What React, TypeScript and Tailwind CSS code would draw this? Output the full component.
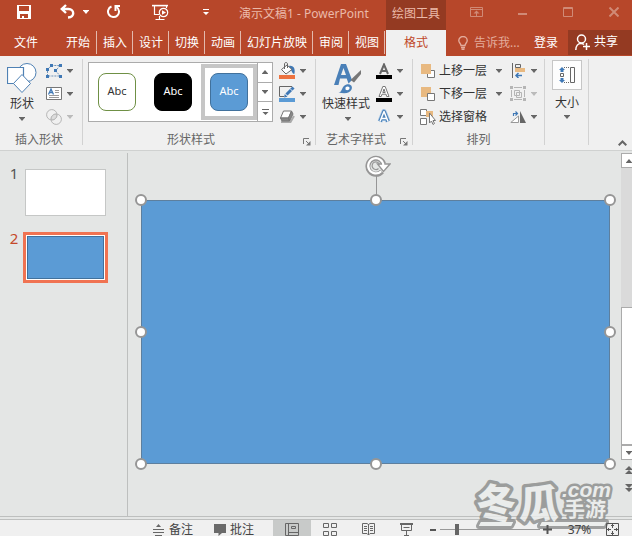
import React from 'react'
import clsx from 'clsx'

const TABS = ['开始', '插入', '设计', '切换', '动画', '幻灯片放映', '审阅', '视图']

const HANDLES = [
  'left-0 top-0',
  'left-1/2 top-0',
  'left-full top-0',
  'left-0 top-1/2',
  'left-full top-1/2',
  'left-0 top-full',
  'left-1/2 top-full',
  'left-full top-full',
]

interface ICaretProps {
  className?: string
}

const Caret: React.FC<ICaretProps> = ({ className }) => (
  <svg width="6" height="4" viewBox="0 0 6 4" className={clsx('shrink-0', className)} fill="currentColor">
    <path d="M0 0h6v.5L3 4 0 .5z" />
  </svg>
)

interface IIconButtonProps {
  label: string
  className?: string
  disabled?: boolean
  children: React.ReactNode
}

const IconButton: React.FC<IIconButtonProps> = ({ label, className, disabled, children }) => (
  <button type="button" aria-label={label} disabled={disabled} className={clsx('flex items-center', className)}>
    {children}
  </button>
)

const TitleBar: React.FC = () => (
  <div className="flex h-[30px] text-white">
    <div className="flex w-[239px] shrink-0 items-start pt-1 pl-[17px]">
      <IconButton label="保存">
        <svg width="14" height="15" viewBox="0 0 14 15" fill="currentColor">
          <path fillRule="evenodd" d="M0 1h14v14H0zM2 2v5h10V2zM3 10v4h2v-2h2v2h4v-4z" />
        </svg>
      </IconButton>
      <IconButton label="撤消" className="ml-[29px]">
        <svg width="15" height="15" viewBox="0 0 15 15" fill="none" stroke="currentColor" strokeWidth="2.4">
          <path d="M6 1L1.800 5 6 9M2 5h6.500c3 0 4.700 2 4.700 4.200S11.500 13.200 8 13.500" />
        </svg>
      </IconButton>
      <IconButton label="撤消选项" className="ml-2 h-[15px]">
        <Caret />
      </IconButton>
      <IconButton label="重复" className="ml-[18px]">
        <svg width="14" height="15" viewBox="0 0 14 15" fill="none" stroke="currentColor" strokeWidth="2">
          <path d="M4.500 2.500A5.500 5.500 0 1 0 9.500 3" />
          <path d="M13 2H8.500v5" />
        </svg>
      </IconButton>
      <IconButton label="从头开始放映" className="ml-[31px]">
        <svg width="17" height="17" viewBox="0 0 17 17" fill="none" stroke="currentColor" strokeWidth="1.200">
          <path d="M0 1.600h16" strokeWidth="1.600" />
          <path d="M2.500 2v8.500H7M14.500 2v2M7.500 12v3M3.500 15.500h9" />
          <circle cx="11.500" cy="8.500" r="4.200" />
          <path d="M10 6.200l4 2.300-4 2.300z" fill="currentColor" stroke="none" />
        </svg>
      </IconButton>
      <IconButton label="自定义快速访问工具栏" className="ml-[34px] h-4">
        <svg width="6" height="6" viewBox="0 0 6 6" fill="currentColor">
          <path d="M0 0h6v1H0zM0 3h6L3 6z" />
        </svg>
      </IconButton>
    </div>
    <h1 className="w-[147px] shrink-0 text-xs leading-7 whitespace-nowrap text-[#ebb9a9]">演示文稿1 - PowerPoint</h1>
    <div className="w-[60px] shrink-0 bg-[#943a22] text-center text-xs leading-7 text-[#ebb9a9]">绘图工具</div>
    <div className="-mr-[5px] ml-auto flex h-6 text-[#d08a76]">
      <IconButton label="功能区显示选项" className="w-[46px] justify-center">
        <svg width="13" height="10" viewBox="0 0 13 10" fill="none" stroke="currentColor">
          <path d="M.5.5h12v9H.5zM1 2.500h11M6.500 9V4.500" />
          <path d="M6.500 3.500L9.500 6.500h-6z" fill="currentColor" stroke="none" />
        </svg>
      </IconButton>
      <IconButton label="最小化" className="w-[46px] justify-center pt-1">
        <svg width="9" height="2" viewBox="0 0 9 2" fill="currentColor">
          <path d="M0 0h9v2H0z" />
        </svg>
      </IconButton>
      <IconButton label="最大化" className="w-[46px] justify-center">
        <svg width="10" height="10" viewBox="0 0 10 10" fill="none" stroke="currentColor">
          <path d="M.5.5h9v9h-9zM0 1.500h10" />
        </svg>
      </IconButton>
      <IconButton label="关闭" className="w-[46px] justify-center">
        <svg width="10" height="10" viewBox="0 0 10 10" stroke="currentColor" strokeWidth="2">
          <path d="M.5.5l9 9M9.500.5l-9 9" />
        </svg>
      </IconButton>
    </div>
  </div>
)

const TabBar: React.FC = () => (
  <nav className="flex h-[26px] text-xs leading-6 whitespace-nowrap text-white">
    <button type="button" className="w-[60px] shrink-0 pl-3.5 text-left">
      文件
    </button>
    <div className="flex shrink-0 items-start pt-px">
      {TABS.map((tab) => (
        <button
          key={tab}
          type="button"
          className="h-[23px] border-r border-[#e3b9ad] pr-[5px] pl-1.5 leading-[22px] first:pr-1.5">
          {tab}
        </button>
      ))}
    </div>
    <button type="button" className="ml-px w-[60px] shrink-0 bg-[#f0f0f0] text-[#c0482a]">
      格式
    </button>
    <label className="ml-auto flex items-center gap-1.5 text-[#e3ab9b]">
      <svg width="10" height="14" viewBox="0 0 10 14" fill="none" stroke="currentColor" strokeWidth="1.400">
        <path d="M3 9.500C3 7.500.8 7 .8 4.500a4.200 4 0 0 1 8.400 0C9.200 7 7 7.500 7 9.500zM3 11.500h4M3.500 13.300h3" />
      </svg>
      <input
        type="text"
        aria-label="告诉我您想要做什么"
        placeholder="告诉我..."
        className="w-[50px] bg-transparent text-xs leading-6 outline-none placeholder:text-[#e3ab9b]"
      />
    </label>
    <button type="button" className="ml-2.5 shrink-0">
      登录
    </button>
    <button type="button" className="ml-2.5 flex h-[25px] w-16 shrink-0 items-center gap-1 bg-[#943a22] pl-[7px] leading-[22px]">
      <svg width="15" height="17" viewBox="0 0 15 17" fill="none" stroke="currentColor" strokeWidth="1.500">
        <circle cx="6.500" cy="5" r="4" />
        <path d="M.8 16c0-4 2.200-6.500 5.200-6.500 1.500 0 2.500.5 3 1M8 12.500h7M11.500 9v7" />
      </svg>
      <span className="-mt-0.5">共享</span>
    </button>
  </nav>
)

interface IRibbonGroupProps {
  title: string
  className: string
  hasLauncher?: boolean
  children: React.ReactNode
}

const RibbonGroup: React.FC<IRibbonGroupProps> = ({ title, className, hasLauncher, children }) => (
  <section className={clsx('flex h-[86px] shrink-0 flex-col justify-between border-r border-[#d2d2d2]', className)}>
    <div className="flex">{children}</div>
    {title ? (
      <div className="flex h-2.5 items-center text-xs leading-[10px] text-[#666]">
        <h2 className={clsx('flex-1 text-center', hasLauncher && 'pr-1')}>{title}</h2>
        {hasLauncher ? (
          <IconButton label={`${title}选项`} className="mr-1 pt-1">
            <svg width="8" height="8" viewBox="0 0 8 8" fill="none" stroke="#777">
              <path d="M.5 6V.5H6M3 3l3.500 3.500" />
              <path d="M7.500 3v4.500H3z" fill="#777" stroke="none" />
            </svg>
          </IconButton>
        ) : null}
      </div>
    ) : null}
  </section>
)

interface IToolProps {
  label: string
  text?: string
  disabled?: boolean
  hideCaret?: boolean
  children: React.ReactNode
}

// One row of a ribbon column: icon, optional caption, drop-down arrow
const Tool: React.FC<IToolProps> = ({ label, text, disabled, hideCaret, children }) => (
  <button
    type="button"
    aria-label={label}
    disabled={disabled}
    className={clsx('flex h-[23px] items-center', disabled ? 'text-[#bbb]' : 'text-[#666]')}>
    <span className="flex w-4 justify-center">{children}</span>
    {text ? <span className="w-[60px] pl-[3px] text-left text-xs whitespace-nowrap text-[#333]">{text}</span> : null}
    {hideCaret ? null : <Caret className={text ? '' : 'ml-[5px]'} />}
  </button>
)

const InsertShapes: React.FC = () => (
  <RibbonGroup title="插入形状" className="w-[83px] pr-1">
    <button type="button" className="flex w-[46px] flex-col items-center pt-1 pr-0.5 text-xs text-[#333]">
      <svg width="30" height="31" viewBox="0 0 30 31" fill="#fff" stroke="#4f81b4">
        <circle cx="20" cy="9.500" r="9" />
        <path d="M.5 4.500h16v16H.5z" strokeWidth="1.200" />
        <path d="M15 11.500l8.500 9-8.500 9-8.500-9z" />
      </svg>
      <span className="leading-5">形状</span>
      <Caret className="mt-[3px] text-[#666]" />
    </button>
    <div className="flex flex-col">
      <Tool label="编辑形状">
        <svg width="16" height="14" viewBox="0 0 16 14" fill="#3f78b5">
          <path d="M1.500 12V5L6 1.500h8L9.500 7l5 5z" fill="none" stroke="#6f93b8" strokeDasharray="2 1" />
          <path d="M0 4h3v3H0zM4 0h3v3H4zM13 0h3v3h-3zM8 5h3v3H8zM0 11h3v3H0zM13 11h3v3h-3z" />
        </svg>
      </Tool>
      <Tool label="文本框">
        <svg width="16" height="13" viewBox="0 0 16 13" fill="none" stroke="#777">
          <path d="M.5.5h15v12H.5z" fill="#fff" />
          <path d="M9 3.500h4M9 5.500h4M3 8.500h10M3 10.500h10" stroke="#999" />
          <path d="M2.500 7.500L5 2l2.500 5.500M3.500 5.500h3" stroke="#3f78b5" strokeWidth="1.300" />
        </svg>
      </Tool>
      <Tool label="合并形状" disabled>
        <svg width="16" height="16" viewBox="0 0 16 16" fill="none" stroke="#b5b5b5">
          <circle cx="5.800" cy="5.800" r="5.200" />
          <circle cx="10.200" cy="10.200" r="5.200" />
          <path d="M5.500 10.500c-1-3 2-6 5-5 1 3-2 6-5 5z" fill="#dcdcdc" />
        </svg>
      </Tool>
    </div>
  </RibbonGroup>
)

const SWATCHES = [
  { name: '白色', frame: '', box: 'border-[#6f9045] bg-white text-[#333]' },
  { name: '黑色', frame: '', box: 'border-black bg-black text-white' },
  { name: '蓝色', frame: 'border-4 border-[#c6c6c6]', box: 'border-[#41719c] bg-[#5b9bd5] text-white' },
]

const ShapeStyles: React.FC = () => (
  <RibbonGroup title="形状样式" className="w-[233px]" hasLauncher>
    <div className="mt-[3px] ml-[5px] flex h-[60px] w-[185px] border border-[#ababab] bg-white">
      {SWATCHES.map((swatch) => (
        <button
          key={swatch.name}
          type="button"
          aria-label={swatch.name}
          className={clsx('my-px flex w-14 items-center justify-center', swatch.frame)}>
          <span
            className={clsx(
              'flex size-[38px] shrink-0 items-center justify-center rounded-lg border pb-0.5 text-[11px] leading-4',
              swatch.box
            )}>
            Abc
          </span>
        </button>
      ))}
      <div className="flex flex-1 flex-col divide-y divide-[#ababab] border-l border-[#ababab] text-[#666]">
        <IconButton label="上一行" className="flex-1 justify-center">
          <Caret className="rotate-180" />
        </IconButton>
        <IconButton label="下一行" className="flex-1 justify-center">
          <Caret />
        </IconButton>
        <IconButton label="其他样式" className="flex-1 justify-center">
          <svg width="7" height="6" viewBox="0 0 7 6" fill="currentColor">
            <path d="M0 0h7v1H0zM.5 3h6l-3 3z" />
          </svg>
        </IconButton>
      </div>
    </div>
    <div className="ml-1.5 flex flex-col">
      <Tool label="形状填充">
        <svg width="16" height="17" viewBox="0 0 16 17" fill="none" stroke="#666">
          <path d="M0 13h16v4H0z" fill="#ed7340" stroke="none" />
          <path d="M10 4c5-1 6.500 3 5.300 8-2.500-.5-2.300-4-4.300-5z" fill="#3f78b5" stroke="none" />
          <path d="M2.500 7.500L8 3l5 4.500-6 4.500z" fill="#fff" />
          <path d="M5.500 7V2c0-2 3-2 3 0v4" />
        </svg>
      </Tool>
      <Tool label="形状轮廓">
        <svg width="16" height="16" viewBox="0 0 16 16" fill="none" stroke="#666">
          <path d="M0 12h16v4H0z" fill="#5b9bd5" stroke="none" />
          <path d="M13 .5H.5v10H5" />
          <path d="M7.500 8.500L14.500 1.500" stroke="#3f78b5" strokeWidth="3" />
          <path d="M5 11.500l.8-3.500 2.700 2.700z" fill="#3f78b5" stroke="none" />
          <path d="M11.200 2.800l2.200 2.200" stroke="#fff" strokeWidth=".8" />
        </svg>
      </Tool>
      <Tool label="形状效果">
        <svg width="16" height="13" viewBox="0 0 16 13" fill="none" stroke="#777">
          <path d="M2 12h9.500l3.500-6" stroke="#aaa" strokeWidth="2" />
          <path d="M4.500 1h8l-3 7h-8z" fill="#fff" />
          <path d="M12.500 1l1.500 3-3.500 7-1-3zM1.500 8h8l1 3h-7.500z" fill="#888" />
        </svg>
      </Tool>
    </div>
  </RibbonGroup>
)

const WordArtStyles: React.FC = () => (
  <RibbonGroup title="艺术字样式" className="w-[97px]" hasLauncher>
    <button type="button" className="flex w-[60px] flex-col items-center pt-[5px] pl-1 text-xs text-[#333]">
      <svg width="28" height="30" viewBox="0 0 28 30" fill="#4a80b8">
        <path fillRule="evenodd" d="M0 21L7 0h5l6 16-3.500 3.500-1.800-5H6L4.500 21zM7 11h5L9.500 4z" />
        <path d="M27 6v4l-7 8.500-3.500-2.500z" fill="#777" />
        <path d="M4.500 28.500c4 0 3-7 8-8 4-1 6.500 2 5 5-1.500 3.500-6 4.500-13 3z" />
        <path d="M11.500 23.500c1.500-2 4.500-1 4 1s-3 2-4 1z" fill="#fff" />
      </svg>
      <span className="pr-1 leading-5 whitespace-nowrap">快速样式</span>
      <Caret className="mt-[3px] text-[#666]" />
    </button>
    <div className="flex flex-col">
      <Tool label="文本填充">
        <svg width="16" height="16" viewBox="0 0 16 16" fill="none" stroke="#666">
          <path d="M0 12h16v4H0z" fill="#000" stroke="none" />
          <path d="M4 11l4-9.500L12 11M5.500 8h5" strokeWidth="2" />
        </svg>
      </Tool>
      <Tool label="文本轮廓">
        <svg width="16" height="16" viewBox="0 0 16 16" fill="#fff" stroke="#777">
          <path d="M0 12h16v4H0z" fill="#000" stroke="none" />
          <path d="M3 10.500L6.800.5h2.400l3.800 10h-2.300L10 8.200H6L5.200 10.500zM6.800 6.500h2.400L8 3z" fillRule="evenodd" />
        </svg>
      </Tool>
      <Tool label="文本效果">
        <svg width="16" height="15" viewBox="0 0 16 15" fill="none" strokeLinejoin="round">
          <path d="M4 12.500L8 2.500l4 10M5.500 9.500h5" stroke="#a9c8e6" strokeWidth="5" />
          <path d="M4 12.500L8 2.500l4 10M5.500 9.500h5" stroke="#4a80b8" strokeWidth="3.500" />
          <path d="M4 12.500L8 2.500l4 10M5.500 9.500h5" stroke="#fff" strokeWidth="1.500" />
        </svg>
      </Tool>
    </div>
  </RibbonGroup>
)

const Arrange: React.FC = () => (
  <RibbonGroup title="排列" className="w-[132px]">
    <div className="ml-[7px] flex flex-col">
      <Tool label="上移一层" text="上移一层">
        <svg width="14" height="14" viewBox="0 0 14 14" fill="none" stroke="#777">
          <path d="M6.500 6.500h7v7h-7z" fill="#fff" />
          <path d="M0 0h10v10H0z" fill="#e8b981" stroke="none" />
        </svg>
      </Tool>
      <Tool label="下移一层" text="下移一层">
        <svg width="14" height="14" viewBox="0 0 14 14" fill="none" stroke="#777">
          <path d="M0 0h10v10H0z" fill="#e8b981" stroke="none" />
          <path d="M6.500 6.500h7v7h-7z" fill="#fff" />
        </svg>
      </Tool>
      <Tool label="选择窗格" text="选择窗格" hideCaret>
        <svg width="16" height="16" viewBox="0 0 16 16" fill="#fff" stroke="#777">
          <path d="M.5.5h6v6h-6zM.5 9.500h6v6h-6z" />
          <path d="M6 2h7v6H6z" fill="#e8b981" stroke="none" />
          <path d="M9.500 4v10l2-2 1.500 3.500 1.500-1-1.500-3h2.500z" />
        </svg>
      </Tool>
    </div>
    <div className="ml-2 flex flex-col">
      <Tool label="对齐">
        <svg width="14" height="15" viewBox="0 0 14 15" fill="none" stroke="#666">
          <path d="M1.500 0v15M4.500 1.500h5v3h-5z" />
          <path d="M4 5h10v4H4z" fill="#e8b981" stroke="none" />
          <path d="M11 12.500H5M7.500 10L5 12.500 7.500 15" stroke="#3f78b5" strokeWidth="1.500" />
        </svg>
      </Tool>
      <Tool label="组合" disabled>
        <svg width="16" height="15" viewBox="0 0 16 15" fill="none" stroke="#b5b5b5">
          <path d="M4.500 4.500h5v5h-5zM6.500 6.500h5v5h-5zM4 1.500h8M1.500 4v7M14.500 4v7M4 13.500h8" />
          <path d="M0 0h3v3H0zM13 0h3v3h-3zM0 12h3v3H0zM13 12h3v3h-3z" fill="#b5b5b5" stroke="none" />
        </svg>
      </Tool>
      <Tool label="旋转">
        <svg width="16" height="12" viewBox="0 0 16 12" fill="none" stroke="#999">
          <path d="M8.500 5v6.500H.8z" fill="#fff" />
          <path d="M10 0l6 12h-6z" fill="#666" stroke="none" />
          <path d="M3.500 5V2.500H7M5.500.5l2 2-2 2" stroke="#3f78b5" strokeWidth="1.200" />
        </svg>
      </Tool>
    </div>
  </RibbonGroup>
)

const Size: React.FC = () => (
  <RibbonGroup title="" className="w-11">
    <button type="button" className="mt-px ml-[7px] flex flex-col items-center text-xs text-[#333]">
      <span className="flex size-[30px] items-center justify-center border border-[#c6c6c6] bg-[#fdfdfd]">
        <svg width="16" height="16" viewBox="0 0 16 16" fill="none" stroke="#666">
          <path d="M11.500.5h4v15h-4z" />
          <path d="M1.500 6.500h3v3h-3z" />
          <path d="M5 .5h6M5 15.500h6" strokeDasharray="1 1" />
          <path d="M3 0l3 3H4.500v2h-3V3H0zM3 16l3-3H4.500v-2h-3v2H0z" fill="#3f78b5" stroke="none" />
        </svg>
      </span>
      <span className="mt-[3px] leading-5">大小</span>
      <Caret className="mt-0.5 text-[#666]" />
    </button>
  </RibbonGroup>
)

const Ribbon: React.FC = () => (
  <div className="flex h-[95px] shrink-0 border-b border-[#cfd1d0] bg-[#f0f0f0] pt-[3px]">
    <InsertShapes />
    <ShapeStyles />
    <WordArtStyles />
    <Arrange />
    <Size />
    <IconButton label="折叠功能区" className="mr-[5px] mb-1 ml-auto self-end">
      <svg width="9" height="6" viewBox="0 0 9 6" fill="none" stroke="#666" strokeWidth="2">
        <path d="M.7 5.300L4.500 1.500l3.800 3.800" />
      </svg>
    </IconButton>
  </div>
)

const SlideList: React.FC = () => (
  <aside className="mt-0.5 w-32 shrink-0 border-r border-[#bdbfbe] text-[15px] leading-5">
    <button type="button" className="mt-4 flex w-full items-start text-[#555]">
      <span className="-mt-1.5 w-[25px] pl-[3px]">1</span>
      <span className="h-[47px] w-[81px] border border-[#c5c7c6] bg-white" />
    </button>
    <button type="button" className="mt-4 flex w-full items-start text-[#c4492a]">
      <span className="-mt-1 w-[23px] pl-[5px]">2</span>
      <span className="h-[51px] w-[85px] border-[3px] border-[#f07352] bg-white p-px">
        <span className="block size-full border border-[#41719c] bg-[#5b9bd5]" />
      </span>
    </button>
  </aside>
)

const Canvas: React.FC = () => (
  <div className="flex min-w-0 flex-1 pt-[49px] pr-[11px] pb-[52px] pl-[13px]">
    <div className="relative flex-1 bg-[#5b9bd5] outline -outline-offset-1 outline-[#5d7f9e]">
      {/* rotation handle */}
      <div className="absolute -top-7 left-1/2 h-7 w-px bg-[#969696]" />
      <svg
        width="26"
        height="22"
        viewBox="0 0 26 22"
        fill="none"
        className="absolute left-1/2 -mt-[45px] -translate-x-[11px]">
        <path d="M17 16.500A8 8 0 1 1 18.600 9" stroke="#969696" strokeWidth="5" />
        <path d="M12.500 9H25l-6.500 7.500z" fill="#fff" stroke="#969696" strokeWidth="1.400" />
        <path d="M16.200 16.200A7.600 7.600 0 1 1 18.400 10.500" stroke="#fff" strokeWidth="2.200" />
        <path d="M13.500 13.500A3.800 3.800 0 1 1 14.500 9.500" stroke="#969696" strokeWidth="1.200" />
      </svg>
      {HANDLES.map((place) => (
        <span
          key={place}
          className={clsx(
            'absolute size-3 -translate-x-1/2 -translate-y-1/2 rounded-full border-2 border-[#969696] bg-white',
            place
          )}
        />
      ))}
    </div>
  </div>
)

const ScrollBar: React.FC = () => (
  <div className="mt-0.5 flex w-[15px] shrink-0 flex-col text-[#666]">
    <div className="flex flex-1 flex-col bg-[#dadada]">
      <IconButton label="向上滚动" className="h-[15px] justify-center border border-[#ababab] bg-white">
        <Caret className="rotate-180" />
      </IconButton>
      <div className="flex-1" />
      <div className="h-[45%] border border-[#ababab] bg-white" />
      <IconButton label="向下滚动" className="h-[15px] justify-center border border-[#ababab] bg-white">
        <Caret />
      </IconButton>
    </div>
    <IconButton label="上一张幻灯片" className="mt-1.5 justify-center">
      <svg width="8" height="8" viewBox="0 0 8 8" fill="currentColor">
        <path d="M4 0l4 4H0zM4 4l4 4H0z" />
      </svg>
    </IconButton>
    <IconButton label="下一张幻灯片" className="mt-2.5 mb-6 justify-center">
      <svg width="8" height="8" viewBox="0 0 8 8" fill="currentColor">
        <path d="M0 0h8L4 4zM0 4h8L4 8z" />
      </svg>
    </IconButton>
  </div>
)

const StatusBar: React.FC = () => (
  <footer className="-mb-[3px] flex h-5 shrink-0 items-center border-t border-[#bdbfbe] bg-[#f0f0f0] text-xs text-[#444]">
    <div className="relative z-10 ml-auto flex h-full shrink-0 items-center">
      <button type="button" className="flex items-center gap-[5px] leading-5">
        <svg width="11" height="12" viewBox="0 0 11 12" fill="none" stroke="#666">
          <path d="M0 5.500h11M0 8.500h11M2 11.500h7" />
          <path d="M5.500 0L8 3H3z" fill="#666" stroke="none" />
        </svg>
        备注
      </button>
      <button type="button" className="ml-[21px] flex items-center gap-1 leading-5">
        <svg width="12" height="12" viewBox="0 0 12 12" fill="#6a6a6a">
          <path d="M0 0h12v9H8l-3.500 3V9H0z" />
        </svg>
        批注
      </button>
      <IconButton label="普通视图" className="ml-[19px] h-full w-[38px] justify-center bg-[#c8cac9]">
        <svg width="14" height="13" viewBox="0 0 14 13" fill="none" stroke="#666">
          <path d="M.5.5h13v12H.5zM3.500 1v11M6.500 3.500h4v2h-4zM4 9.500h9" />
        </svg>
      </IconButton>
      <IconButton label="幻灯片浏览" className="w-[38px] justify-center">
        <svg width="14" height="13" viewBox="0 0 14 13" fill="none" stroke="#666">
          <path d="M.5.5h5v4h-5zM8.500.5h5v4h-5zM.5 8.500h5v4h-5zM8.500 8.500h5v4h-5z" />
        </svg>
      </IconButton>
      <IconButton label="阅读视图" className="w-[38px] justify-center">
        <svg width="13" height="13" viewBox="0 0 13 13" fill="none" stroke="#666">
          <path d="M.5.5H5l1.500 1L8 .5h4.500v10H8l-1.500 1.500L5 10.500H.5zM6.500 1v11M2 3.500h3M2 5.500h3M2 7.500h3M8 3.500h3M8 5.500h3M8 7.500h3" />
        </svg>
      </IconButton>
      <IconButton label="幻灯片放映" className="w-[38px] justify-center">
        <svg width="13" height="13" viewBox="0 0 13 13" fill="none" stroke="#666">
          <path d="M0 1h13" strokeWidth="2" />
          <path d="M1.500 2v5.500h10V2M3.500 4.500h6M6.500 8v4M4 12.500h5" />
        </svg>
      </IconButton>
      <IconButton label="缩小" className="ml-[5px]">
        <svg width="6" height="2" viewBox="0 0 6 2" fill="#555">
          <path d="M0 0h6v2H0z" />
        </svg>
      </IconButton>
      <input
        type="range"
        aria-label="显示比例"
        defaultValue={16}
        className="ml-1 h-3 w-[100px] appearance-none bg-transparent [&::-webkit-slider-runnable-track]:h-px [&::-webkit-slider-runnable-track]:bg-[#999] [&::-webkit-slider-thumb]:-mt-[5px] [&::-webkit-slider-thumb]:h-[11px] [&::-webkit-slider-thumb]:w-1 [&::-webkit-slider-thumb]:appearance-none [&::-webkit-slider-thumb]:bg-[#666]"
      />
      <IconButton label="放大" className="ml-[3px]">
        <svg width="9" height="9" viewBox="0 0 9 9" fill="none" stroke="#555" strokeWidth="2">
          <path d="M0 4.500h9M4.500 0v9" />
        </svg>
      </IconButton>
      <button type="button" className="ml-[15px] w-[25px] leading-4">
        37%
      </button>
      <IconButton label="适应窗口大小" className="mr-[13px] ml-3.5">
        <svg width="13" height="13" viewBox="0 0 13 13" fill="none" stroke="#555">
          <path d="M.5.5h12v12H.5z" />
          <path d="M6.500 1v4M6.500 8v4M1 6.500h4M8 6.500h4M5 3l1.500-1.500L8 3M5 10l1.500 1.500L8 10M3 5L1.500 6.500 3 8M10 5l1.500 1.500L10 8" />
        </svg>
      </IconButton>
    </div>
  </footer>
)

// Translucent site logo in the lower right corner, under the status bar controls
const Watermark: React.FC = () => (
  <svg
    width="152"
    height="64"
    viewBox="0 0 152 64"
    className="pointer-events-none absolute right-2 bottom-0 font-['Noto_Sans_CJK_SC',sans-serif] opacity-80"
    fill="#eceeed"
    stroke="#8a8c8b"
    strokeLinejoin="round"
    paintOrder="stroke">
    <path d="M9 50h32l-2 4H7zM70 50h64l-2 4H68z" strokeWidth="6" />
    <text x="4" y="46" fontSize="40" strokeWidth="7" className="font-black">
      冬
    </text>
    <text x="47" y="46" fontSize="40" strokeWidth="7" className="font-black">
      瓜
    </text>
    <path d="M9 50h32l-2 4H7zM70 50h64l-2 4H68z" stroke="none" />
    <text x="92" y="44" fontSize="21" strokeWidth="5" className="font-bold">
      手游
    </text>
    <text x="90" y="25" fontSize="21" strokeWidth="5" className="font-['Liberation_Sans',sans-serif] font-bold italic">
      .com
    </text>
  </svg>
)

const App: React.FC = () => {
  return (
    <div className="relative flex h-screen flex-col overflow-hidden bg-[#e4e6e5] font-['Noto_Sans','Noto_Sans_CJK_SC',sans-serif]">
      <header className="shrink-0 bg-[#b7472a]">
        <TitleBar />
        <TabBar />
      </header>
      <Ribbon />
      <main className="-mr-1 flex min-h-0 flex-1 border-b border-[#bdbfbe]">
        <SlideList />
        <Canvas />
        <ScrollBar />
      </main>
      <div className="h-0.5 shrink-0" />
      <StatusBar />
      <Watermark />
    </div>
  )
}

export default App
